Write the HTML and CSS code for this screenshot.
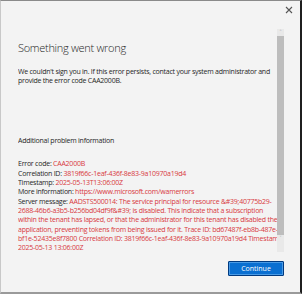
FILE: index.html
```html
<!DOCTYPE html>
<html lang="en">
<head>
  <meta charset="UTF-8">
  <title>Something went wrong</title>
  <link rel="stylesheet" href="styles.css">
</head>
<body>
  <div class="window">
    <div class="title-bar">
      <button class="close-btn" aria-label="Close">
        <svg width="8" height="8" viewBox="0 0 8 8"><path d="M1 1L7 7M7 1L1 7" stroke="#555" stroke-width="1.1"/></svg>
      </button>
    </div>

    <div class="main">
      <div class="content">
        <h1>Something went wrong</h1>
        <p class="intro">We couldn't sign you in. If this error persists, contact your system administrator and<br>provide the error code CAA2000B.</p>

        <p class="section-label">Additional problem information</p>

        <div class="details">
          <div>Error code: <span class="err">CAA2000B</span></div>
          <div>Correlation ID: <span class="err">3819f66c-1eaf-436f-8e83-9a10970a19d4</span></div>
          <div>Timestamp: <span class="err">2025-05-13T13:06:00Z</span></div>
          <div>More information: <span class="err">https://www.microsoft.com/wamerrors</span></div>
          <div>Server message: <span class="err">AADSTS500014: The service principal for resource &amp;#39;40775b29-</span></div>
          <div class="err">2688-46b6-a3b5-b256bd04df9f&amp;#39; is disabled. This indicate that a subscription</div>
          <div class="err">within the tenant has lapsed, or that the administrator for this tenant has disabled the</div>
          <div class="err">application, preventing tokens from being issued for it. Trace ID: bd67487f-eb8b-487e-</div>
          <div class="err">bf1e-52435e8f7800 Correlation ID: 3819f66c-1eaf-436f-8e83-9a10970a19d4 Timestamp:</div>
          <div class="err">2025-05-13 13:06:00Z</div>
        </div>
      </div>

      <!-- fake scrollbar -->
      <div class="scrollbar">
        <span class="arrow">&#708;</span>
        <div class="thumb"></div>
        <span class="arrow">&#709;</span>
      </div>
    </div>

    <div class="footer">
      <button class="primary">Continue</button>
    </div>
  </div>
</body>
</html>
```

FILE: styles.css
```css
body {
  margin: 0;
  font-family: "Open Sans", "Noto Sans", sans-serif;
  background-color: #f3f3f3;
}

.window {
  width: 302px;
  height: 294px;
  box-sizing: border-box;
  display: flex;
  flex-direction: column;
  background-color: #f3f3f3;
  border-top: 1px solid #8a8a8a;
  border-left: 1px solid #c8c8c8;
  border-right: 2px solid #1f1f1f;
  border-bottom: 2px solid #9a9a9a;
}

.title-bar {
  height: 28px;
  display: flex;
  justify-content: flex-end;
}

.close-btn {
  border: none;
  background: none;
  padding: 0;
  width: 23px;
  height: 18px;
  display: flex;
  align-items: center;
  justify-content: center;
}

.main {
  display: flex;
  height: 223px;
  padding-left: 17px;
  padding-right: 16px;
}

.content {
  flex: 1;
  overflow: hidden;
  white-space: nowrap;
  font-size: 7px;
  line-height: 9.33px;
  letter-spacing: -0.24px;
  color: #262626;
}

h1 {
  font-size: 11px;
  font-weight: 300;
  line-height: 20px;
  letter-spacing: -0.3px;
  color: #1f1f1f;
  margin: 9px 0 0;
}

.intro {
  margin: 9px 0 0;
}

.section-label {
  margin: 50px 0 0;
}

.details {
  margin-top: 14.5px;
}

.err {
  color: #d8393e;
}

.scrollbar {
  width: 7px;
  display: flex;
  flex-direction: column;
  align-items: center;
  background-color: #e9e9e9;
}

.arrow {
  font-size: 6px;
  line-height: 7px;
  color: #9a9a9a;
}

.thumb {
  width: 7px;
  height: 199px;
  background-color: #bdbdbd;
}

.footer {
  display: flex;
  justify-content: flex-end;
  padding: 9px 16px 0 0;
}

.primary {
  width: 56px;
  height: 15px;
  padding: 0;
  font-family: inherit;
  font-size: 7px;
  color: #fff;
  background-color: #0a6fd1;
  border: 1px solid #003a80;
  border-radius: 1px;
  box-shadow: inset 0 0 0 1px #4a9be6;
}
```
